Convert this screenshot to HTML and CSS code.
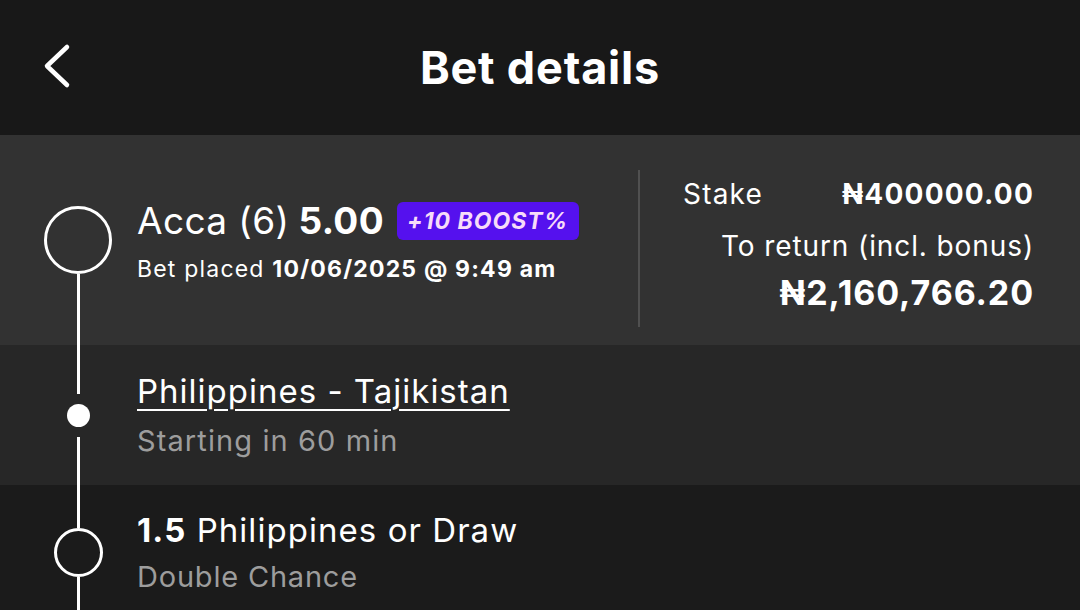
FILE: index.html
```html
<!DOCTYPE html>
<html lang="en">

<head>
    <title>Bet details</title>
    <link rel="stylesheet" href="styles.css">
</head>

<body>
    <header class="topbar">
        <button class="back" aria-label="Back">
            <svg width="40" height="48" viewBox="0 0 40 48">
                <path d="M24 5 L4 24 L24 43" fill="none" stroke="#ffffff" stroke-width="4.5" stroke-linecap="round" stroke-linejoin="round" />
            </svg>
        </button>
        <h1>Bet details</h1>
        <span></span>
    </header>

    <section class="row summary">
        <div class="rail">
            <span class="gap"></span>
            <span class="node node-big"></span>
            <span class="line"></span>
        </div>
        <div class="summary-main">
            <div class="bet-title">
                Acca (6) <b>5.00</b>
                <span class="boost">+10 BOOST%</span>
            </div>
            <div class="bet-placed">Bet placed <b>10/06/2025 @ 9:49 am</b></div>
        </div>
        <div class="summary-side">
            <div class="stake-row">
                <span>Stake</span>
                <b>₦400000.00</b>
            </div>
            <div class="return-label">To return (incl. bonus)</div>
            <div class="return-value">₦2,160,766.20</div>
        </div>
    </section>

    <section class="row event">
        <div class="rail">
            <span class="line"></span>
            <span class="node node-dot"></span>
            <span class="line"></span>
        </div>
        <div class="row-text">
            <a class="event-name" href="#">Philippines - Tajikistan</a>
            <div class="sub">Starting in 60 min</div>
        </div>
    </section>

    <section class="row pick">
        <div class="rail">
            <span class="line line-top"></span>
            <span class="node node-mid"></span>
            <span class="line"></span>
        </div>
        <div class="row-text">
            <div class="pick-name"><b>1.5</b> Philippines or Draw</div>
            <div class="sub sub-pick">Double Chance</div>
        </div>
    </section>
</body>

</html>
```

FILE: styles.css
```css
* {
    box-sizing: border-box;
    font-family: "Inter", "Noto Sans", sans-serif;
}

html, body {
    margin: 0;
    height: 100%;
    overflow: hidden;
}

body {
    background-color: #1b1b1b;
    color: #ffffff;
}

b {
    font-weight: 700;
}

/* header */

.topbar {
    height: 135px;
    background-color: #181818;
    display: grid;
    grid-template-columns: 1fr auto 1fr;
    align-items: center;
}

.topbar h1 {
    margin: 0;
    font-size: 45px;
    font-weight: 700;
    letter-spacing: 0.8px;
}

.back {
    justify-self: start;
    background: none;
    border: 0;
    padding: 0;
    margin-left: 43px;
    margin-top: -3px;
    display: flex;
    cursor: pointer;
}

/* rows with the timeline rail */

.row {
    display: flex;
}

.rail {
    width: 116px;
    margin-left: 20px;
    flex-shrink: 0;
    display: flex;
    flex-direction: column;
    align-items: center;
}

.rail .gap {
    flex: 1;
}

.rail .line {
    flex: 1;
    width: 3px;
    background-color: #ffffff;
}

.rail .line-top {
    flex: none;
    height: 43px;
}

.node {
    flex-shrink: 0;
    border-radius: 50%;
}

.node-big {
    width: 68px;
    height: 68px;
    border: 3px solid #ffffff;
}

.node-mid {
    width: 49px;
    height: 49px;
    border: 3px solid #ffffff;
}

.node-dot {
    width: 23px;
    height: 23px;
    background-color: #ffffff;
    margin: 10px 0;
}

/* summary */

.summary {
    height: 210px;
    background-color: #323232;
}

.summary-main {
    flex: 1;
    padding: 63px 0 0 1px;
}

.bet-title {
    font-size: 37px;
    letter-spacing: 0.4px;
    display: flex;
    align-items: center;
    gap: 10px;
    white-space: nowrap;
}

.bet-title b {
    margin-left: -1px;
}

.boost {
    margin-left: 3px;
    background-color: #5511ee;
    color: #f7dcf9;
    font-size: 23px;
    font-weight: 700;
    font-style: italic;
    letter-spacing: 1px;
    padding: 5px 11px 5px 10px;
    border-radius: 6px;
}

.bet-placed {
    font-size: 23px;
    letter-spacing: 1.2px;
    margin-top: 12px;
}

.summary-side {
    width: 442px;
    margin: 35px 0 18px;
    border-left: 2px solid #505050;
    padding: 6px 46px 0 43px;
    text-align: right;
    font-size: 28px;
}

.stake-row {
    display: flex;
    justify-content: space-between;
    letter-spacing: 1.2px;
    margin-top: 1px;
}

.return-label {
    letter-spacing: 0.9px;
    margin-top: 18px;
}

.return-value {
    font-size: 34px;
    font-weight: 700;
    letter-spacing: 0.9px;
    margin-top: 9px;
}

/* event and pick rows */

.event {
    height: 140px;
    background-color: #272727;
}

.pick {
    height: 134px;
    background-color: #1b1b1b;
}

.row-text {
    padding-left: 1px;
}

.event .row-text {
    padding-top: 26px;
}

.pick .row-text {
    padding-top: 25px;
}

.event-name {
    color: #ffffff;
    font-size: 33px;
    letter-spacing: 1px;
    text-decoration: underline;
    text-decoration-thickness: 2px;
    text-underline-offset: 6px;
}

.pick-name {
    font-size: 33px;
    letter-spacing: 1.05px;
}

.sub {
    color: #9d9d9d;
    font-size: 29px;
    letter-spacing: 1.1px;
    margin-top: 12px;
}

.sub-pick {
    letter-spacing: 0.8px;
    margin-top: 9px;
}
```
